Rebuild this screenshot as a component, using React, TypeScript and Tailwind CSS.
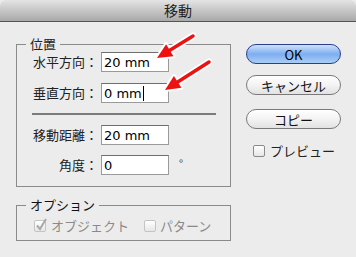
const JP = { fontFamily: '"Noto Sans CJK JP", "Noto Sans", sans-serif' };
const NUM = { fontFamily: '"DejaVu Sans", "Noto Sans CJK JP", sans-serif' };

function Field({ value, caret }: { value: string; caret?: boolean }) {
  return (
    <div
      className="h-[20px] w-[68px] bg-white border border-[#9a9a9a] border-t-[#6f6f6f] flex items-center pl-[2px] text-[13px] text-black leading-none"
      style={NUM}
    >
      <span>{value}</span>
      {caret && <span className="ml-[1px] h-[15px] w-[1px] bg-black" />}
    </div>
  );
}

function Row({ label, value, caret, unit }: { label: string; value: string; caret?: boolean; unit?: string }) {
  return (
    <div className="flex items-center h-[20px]">
      <div className="w-[66px] text-right text-[13px] text-[#222] whitespace-nowrap">{label}</div>
      <div className="ml-[3px]">
        <Field value={value} caret={caret} />
      </div>
      {unit && <span className="ml-[10px] -mt-[4px] text-[11px] text-[#333]">{unit}</span>}
    </div>
  );
}

function AquaButton({ label, primary }: { label: string; primary?: boolean }) {
  return (
    <div
      className={
        'h-[20px] w-[95px] rounded-full border flex items-center justify-center text-[13px] leading-none ' +
        (primary
          ? 'border-[#2a3f8a] bg-gradient-to-b from-[#cfe1fb] via-[#7eaef0] to-[#a9cdf7] text-black'
          : 'border-[#7a7a7a] bg-gradient-to-b from-white via-[#f3f3f3] to-[#e2e2e2] text-[#111]')
      }
    >
      {label}
    </div>
  );
}

function Check({ checked, disabled }: { checked?: boolean; disabled?: boolean }) {
  return (
    <div
      className={
        'relative h-[12px] w-[12px] rounded-[2px] border bg-gradient-to-b from-white to-[#e6e6e6] ' +
        (disabled ? 'border-[#c4c4c4]' : 'border-[#8a8a8a]')
      }
    >
      {checked && (
        <svg className="absolute -left-[1px] -top-[4px]" width="14" height="15" viewBox="0 0 14 15">
          <path d="M3 8.5 L6 12 L12 2" fill="none" stroke="#a8a8a8" strokeWidth="2" />
        </svg>
      )}
    </div>
  );
}

function Arrow({ x1, y1, x2, y2 }: { x1: number; y1: number; x2: number; y2: number }) {
  const a = Math.atan2(y2 - y1, x2 - x1);
  const len = 15;
  const w = 7;
  const bx = x2 - len * Math.cos(a);
  const by = y2 - len * Math.sin(a);
  const px = -Math.sin(a) * w;
  const py = Math.cos(a) * w;
  const head = `${x2},${y2} ${bx + px},${by + py} ${bx - px},${by - py}`;
  return (
    <g>
      <line x1={x1} y1={y1} x2={bx} y2={by} stroke="white" strokeWidth="7" strokeLinecap="round" />
      <polygon points={head} fill="white" stroke="white" strokeWidth="4" strokeLinejoin="round" />
      <line x1={x1} y1={y1} x2={bx} y2={by} stroke="#ee1111" strokeWidth="3.5" strokeLinecap="round" />
      <polygon points={head} fill="#ee1111" />
    </g>
  );
}

export default function App() {
  return (
    <div className="relative w-[356px] h-[257px] overflow-hidden bg-[#ececec]" style={JP}>
      <div className="h-[22px] rounded-t-[6px] bg-gradient-to-b from-[#e4e4e4] to-[#a9a9a9] border-b border-[#555] flex items-center justify-center text-[14px] text-[#222]">
        移動
      </div>

      <div className="flex">
        <div className="ml-[16px] w-[215px]">
          <fieldset className="mt-[14px] border border-[#8a8a8a] pl-[15px] pb-[9px] h-[151px]">
            <legend className="-ml-[6px] px-[4px] text-[13px] text-[#222] leading-[16px]">位置</legend>
            <div className="flex flex-col gap-[11px]">
              <Row label="水平方向：" value="20 mm" />
              <Row label="垂直方向：" value="0 mm" caret />
            </div>
            <div className="mt-[10px] h-[2px] w-[184px] bg-[#7b7b7b]" />
            <div className="flex flex-col gap-[10px] mt-[10px]">
              <Row label="移動距離：" value="20 mm" />
              <Row label="角度：" value="0" unit="°" />
            </div>
          </fieldset>

          <fieldset className="mt-[10px] border border-[#8a8a8a] pl-[17px] h-[44px]">
            <legend className="-ml-[8px] px-[4px] text-[13px] text-[#111] leading-[16px]">オプション</legend>
            <div className="flex items-center mt-[3px] text-[13px] text-[#8a8a8a]">
              <Check checked disabled />
              <span className="ml-[5px]">オブジェクト</span>
              <div className="ml-[15px]">
                <Check disabled />
              </div>
              <span className="ml-[4px]">パターン</span>
            </div>
          </fieldset>
        </div>

        <div className="ml-[15px] mt-[22px] flex flex-col">
          <AquaButton label="OK" primary />
          <div className="mt-[11px]">
            <AquaButton label="キャンセル" />
          </div>
          <div className="mt-[14px]">
            <AquaButton label="コピー" />
          </div>
          <div className="mt-[12px] ml-[7px] flex items-center text-[13px] text-[#222]">
            <Check />
            <span className="ml-[5px]">プレビュー</span>
          </div>
        </div>
      </div>

      <svg className="absolute left-0 top-0 pointer-events-none" width="356" height="257">
        <Arrow x1={193} y1={36} x2={157} y2={58} />
        <Arrow x1={209} y1={62} x2={165} y2={90} />
      </svg>
    </div>
  );
}
